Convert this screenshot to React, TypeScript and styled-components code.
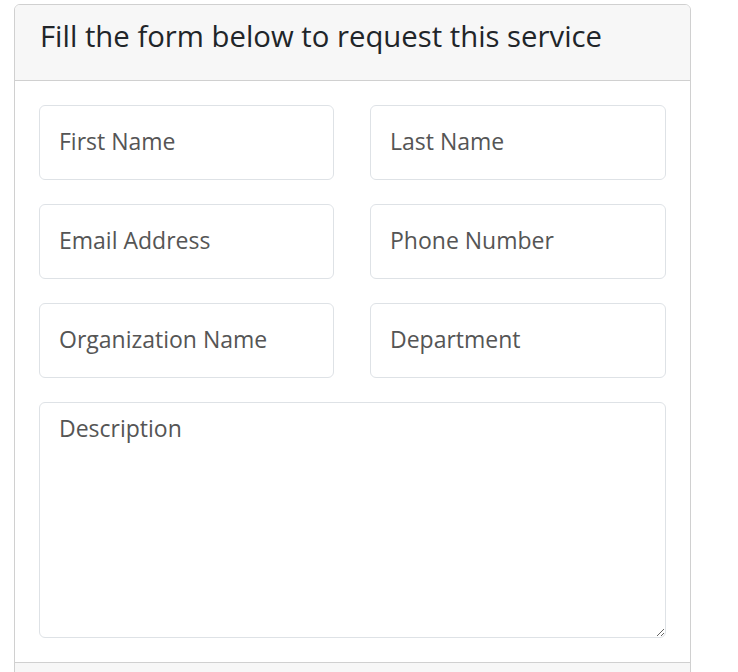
import React from "react";
import styled, { createGlobalStyle } from "styled-components";

const GlobalStyle = createGlobalStyle`
  html, body {
    margin: 0;
    padding: 0;
    background: #fff;
  }
  body {
    font-family: "Open Sans", "Noto Sans", sans-serif;
    color: #212529;
  }
  * {
    box-sizing: border-box;
  }
`;

const Page = styled.div`
  padding: 4px 47px 0 14px;
  height: 672px;
  overflow: hidden;
`;

const Card = styled.div`
  width: 677px;
  border: 1px solid #d0d0d0;
  border-radius: 6px;
  overflow: hidden;
  background: #fff;
`;

const CardHeader = styled.div`
  background: #f7f7f7;
  border-bottom: 1px solid #d0d0d0;
  padding: 12px 25px 0 25px;
  height: 76px;
`;

const Title = styled.h2`
  margin: 0;
  font-size: 29.3px;
  font-weight: 400;
  line-height: 38px;
  color: #212529;
  white-space: nowrap;
`;

const CardBody = styled.form`
  padding: 24px;
  display: grid;
  grid-template-columns: 295fr 296fr;
  column-gap: 36px;
  row-gap: 24px;
`;

const Field = styled.input`
  display: block;
  width: 100%;
  height: 75px;
  padding: 0 19px 3px;
  border: 1px solid #dee2e6;
  border-radius: 6px;
  font-family: inherit;
  font-size: 23px;
  color: #212529;
  background: #fff;
  outline: none;

  &::placeholder {
    color: #555;
    opacity: 1;
  }
`;

const Description = styled.textarea`
  grid-column: 1 / -1;
  display: block;
  width: 100%;
  height: 236px;
  padding: 9px 19px;
  border: 1px solid #dee2e6;
  border-radius: 6px;
  font-family: inherit;
  font-size: 23px;
  line-height: 32px;
  color: #212529;
  background: #fff;
  resize: vertical;
  outline: none;

  &::placeholder {
    color: #555;
    opacity: 1;
  }
`;

const CardFooter = styled.div`
  background: #f7f7f7;
  border-top: 1px solid #d0d0d0;
  height: 40px;
`;

const fields = [
  "First Name",
  "Last Name",
  "Email Address",
  "Phone Number",
  "Organization Name",
  "Department",
];

export default function App() {
  return (
    <>
      <GlobalStyle />
      <Page>
        <Card>
          <CardHeader>
            <Title>Fill the form below to request this service</Title>
          </CardHeader>
          <CardBody onSubmit={(e) => e.preventDefault()}>
            {fields.map((f) => (
              <Field key={f} type="text" placeholder={f} />
            ))}
            <Description placeholder="Description" />
          </CardBody>
          <CardFooter />
        </Card>
      </Page>
    </>
  );
}
